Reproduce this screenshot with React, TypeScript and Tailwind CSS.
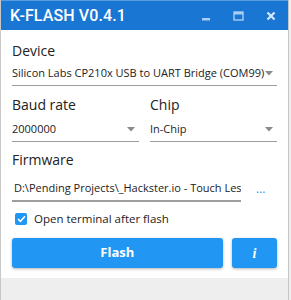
import React from 'react';

const ui = "font-['Open_Sans','Noto_Sans',sans-serif]";

function Caret() {
  return (
    <svg width="8" height="5" viewBox="0 0 8 5" className="shrink-0">
      <path d="M0 0 L8 0 L4 4.5 Z" fill="#8a8a8a" />
    </svg>
  );
}

function Select({ value, className = '' }: { value: string; className?: string }) {
  return (
    <div className={`flex items-center justify-between border-b border-[#9e9e9e] pb-[3px] ${className}`}>
      <span className="text-[11px] text-[#222] leading-[18px] whitespace-nowrap">{value}</span>
      <Caret />
    </div>
  );
}

export default function App() {
  return (
    <div className={`w-[291px] h-[300px] bg-[#eeeeee] ${ui}`}>
      <div className="w-[289px] h-[300px] border-x border-[#c8c8c8] flex flex-col">
        {/* Title bar */}
        <div className="h-[30px] bg-[#1976d2] border-t border-[#5a9be0] flex items-center pl-[9px] pr-[12px] shrink-0">
          <span className="font-['Roboto',sans-serif] font-medium text-white text-[16px] tracking-[0.1px] flex-1">
            K-FLASH V0.4.1
          </span>
          <div className="flex items-center gap-[22px]">
            <svg width="10" height="10" viewBox="0 0 10 10">
              <rect x="1" y="7" width="8" height="2.5" fill="#a9cdf3" />
            </svg>
            <svg width="11" height="10" viewBox="0 0 11 10">
              <rect x="1" y="1" width="9" height="8" fill="none" stroke="#a9cdf3" strokeWidth="1.4" />
              <rect x="1" y="1" width="9" height="2.5" fill="#a9cdf3" />
            </svg>
            <svg width="10" height="10" viewBox="0 0 10 10">
              <path d="M1.5 1.5 L8.5 8.5 M8.5 1.5 L1.5 8.5" stroke="#d6e7fa" strokeWidth="2.2" />
            </svg>
          </div>
        </div>

        {/* Body */}
        <div className="bg-white h-[248px] px-[11px] pt-[11px] shrink-0">
          <div className="text-[14px] text-[#222] leading-[20px]">Device</div>
          <Select className="mt-[3px] pr-[4px]" value="Silicon Labs CP210x USB to UART Bridge (COM99)" />

          <div className="flex gap-[11px] mt-[9px]">
            <div className="flex-1">
              <div className="text-[14px] text-[#222] leading-[20px]">Baud rate</div>
              <Select className="mt-[5px] pr-[4px]" value="2000000" />
            </div>
            <div className="flex-1">
              <div className="text-[14px] text-[#222] leading-[20px]">Chip</div>
              <Select className="mt-[5px] pr-[4px]" value="In-Chip" />
            </div>
          </div>

          <div className="text-[14px] text-[#222] leading-[20px] mt-[8px]">Firmware</div>
          <div className="flex items-center mt-[9px]">
            <div className="w-[229px] shrink-0 border-b-2 border-[#9e9e9e] pb-[3px] pl-[2px] overflow-hidden whitespace-nowrap text-clip text-[11px] text-[#222] leading-[18px]">
              D:\Pending Projects\_Hackster.io - Touch Less Hand Sanitizer
            </div>
            <span className="ml-[15px] text-[#2196f3] text-[12px] leading-[12px] -mt-[4px]">...</span>
          </div>

          <label className="flex items-center gap-[7px] mt-[9px] ml-[3px]">
            <span className="w-[12px] h-[12px] rounded-[2px] bg-[#2196f3] flex items-center justify-center">
              <svg width="9" height="8" viewBox="0 0 9 8">
                <path d="M1 4 L3.4 6.3 L8 1.2" fill="none" stroke="white" strokeWidth="1.6" />
              </svg>
            </span>
            <span className="text-[11.5px] text-[#222] leading-[16px]">Open terminal after flash</span>
          </label>

          <div className="flex gap-[9px] mt-[11px]">
            <button className="w-[214px] h-[30px] rounded-[3px] bg-[#2196f3] text-white text-[13px] font-bold shadow-[0_1px_3px_rgba(0,0,0,0.3)]">
              Flash
            </button>
            <button className="w-[46px] h-[30px] rounded-[3px] bg-[#2196f3] text-white text-[14px] font-bold italic font-['Liberation_Serif',serif] shadow-[0_1px_3px_rgba(0,0,0,0.3)]">
              i
            </button>
          </div>
        </div>
      </div>
    </div>
  );
}
